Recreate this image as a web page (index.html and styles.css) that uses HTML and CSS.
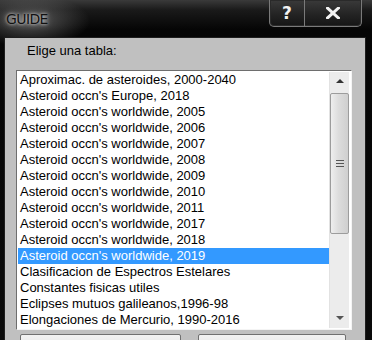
FILE: index.html
```html
<!DOCTYPE html>
<html>
<head>
<meta charset="utf-8">
<link rel="stylesheet" href="styles.css">
</head>
<body>
<div class="window">
  <div class="titlebar">
    <div class="title">GUIDE</div>
    <div class="caption-buttons">
      <div class="cbtn help">?</div>
      <div class="cbtn close">
        <svg width="14" height="12" viewBox="0 0 14 12"><path d="M1.5 1 L12.5 11 M12.5 1 L1.5 11" stroke="#f2f2f2" stroke-width="3" stroke-linecap="square"/></svg>
      </div>
    </div>
  </div>
  <div class="client">
    <div class="label">Elige una tabla:</div>
    <div class="listbox">
      <ul class="items">
        <li>Aproximac. de asteroides, 2000-2040</li>
        <li>Asteroid occn's Europe, 2018</li>
        <li>Asteroid occn's worldwide, 2005</li>
        <li>Asteroid occn's worldwide, 2006</li>
        <li>Asteroid occn's worldwide, 2007</li>
        <li>Asteroid occn's worldwide, 2008</li>
        <li>Asteroid occn's worldwide, 2009</li>
        <li>Asteroid occn's worldwide, 2010</li>
        <li>Asteroid occn's worldwide, 2011</li>
        <li>Asteroid occn's worldwide, 2017</li>
        <li>Asteroid occn's worldwide, 2018</li>
        <li class="selected">Asteroid occn's worldwide, 2019</li>
        <li>Clasificacion de Espectros Estelares</li>
        <li>Constantes fisicas utiles</li>
        <li>Eclipses mutuos galileanos,1996-98</li>
        <li>Elongaciones de Mercurio, 1990-2016</li>
      </ul>
      <div class="scrollbar">
        <div class="arrow up"></div>
        <div class="thumb"><span class="grip"></span></div>
        <div class="track"></div>
        <div class="arrow down"></div>
      </div>
    </div>
    <div class="buttons">
      <div class="btn b1"></div>
      <div class="btn b2"></div>
    </div>
  </div>
</div>
</body>
</html>
```

FILE: styles.css
```css
html, body {
  margin: 0;
  padding: 0;
  background: #000;
}
.window {
  width: 372px;
  height: 340px;
  overflow: hidden;
  background:
    radial-gradient(ellipse 60px 26px at 30px 21px, rgba(150,150,150,0.55), rgba(80,80,80,0) 100%),
    linear-gradient(180deg, #3a3a3a 0px, #1a1a1a 10px, #050505 30px, #0a0a0a 100%);
  display: flex;
  flex-direction: column;
  font-family: "Liberation Sans", Arial, sans-serif;
}
.titlebar {
  height: 37px;
  display: flex;
  align-items: flex-start;
  justify-content: space-between;
  flex-shrink: 0;
}
.title {
  margin: 11px 0 0 6px;
  font-family: "DejaVu Sans", sans-serif;
  font-size: 14px;
  letter-spacing: -0.6px;
  color: #111;
  text-shadow: 0 0 6px #bbb, 0 0 3px #ddd;
}
.caption-buttons {
  display: flex;
  margin-right: 10px;
  height: 26px;
  border: 1px solid #7a7a7a;
  border-top: none;
  border-radius: 0 0 5px 5px;
  box-shadow: inset 0 0 0 1px #2a2a2a;
  background: linear-gradient(180deg, #3a3a3a 0%, #222 60%, #151515 100%);
}
.cbtn {
  display: flex;
  align-items: center;
  justify-content: center;
  color: #f2f2f2;
  font-family: "DejaVu Sans", sans-serif;
  font-weight: bold;
}
.help {
  width: 34px;
  font-size: 17px;
  border-right: 1px solid #7a7a7a;
}
.close {
  width: 56px;
}
.client {
  flex: 1;
  margin: 0 6px 0 4px;
  border: 1px solid #1e1e1e;
  background: #c0c0c0;
  display: flex;
  flex-direction: column;
}
.label {
  margin: 5px 0 0 22px;
  font-size: 13px;
  line-height: 16px;
  color: #000;
  height: 27px;
}
.listbox {
  margin-left: 11px;
  width: 336px;
  height: 260px;
  box-sizing: border-box;
  border: 1px solid;
  border-color: #6e6e6e #f4f4f4 #f4f4f4 #6e6e6e;
  background: #fff;
  padding: 1px 1px 1px 1px;
  display: flex;
  flex-shrink: 0;
}
.items {
  list-style: none;
  margin: 0;
  padding: 0;
  flex: 1;
  font-size: 13px;
  color: #000;
}
.items li {
  height: 16px;
  line-height: 16px;
  padding-left: 2px;
  white-space: nowrap;
}
.items li.selected {
  background: #3399ff;
  color: #fff;
}
.scrollbar {
  width: 19px;
  margin-right: 1px;
  background: #ececec;
  border-left: 1px solid #e2e2e2;
  display: flex;
  flex-direction: column;
}
.arrow {
  height: 20px;
  position: relative;
}
.arrow.up::after {
  content: "";
  position: absolute;
  left: 6px;
  top: 7px;
  border-left: 4px solid transparent;
  border-right: 4px solid transparent;
  border-bottom: 4px solid #333;
}
.arrow.down::after {
  content: "";
  position: absolute;
  left: 6px;
  top: 8px;
  border-left: 4px solid transparent;
  border-right: 4px solid transparent;
  border-top: 4px solid #555;
}
.thumb {
  margin-top: 1px;
  height: 141px;
  box-sizing: border-box;
  border: 1px solid #9c9c9c;
  border-radius: 2px;
  background: linear-gradient(90deg, #eeeeee 0%, #dcdcdc 45%, #cfcfcf 100%);
  display: flex;
  align-items: center;
  justify-content: center;
}
.grip {
  width: 8px;
  height: 7px;
  background: linear-gradient(180deg, #555 0 1px, transparent 1px 3px, #555 3px 4px, transparent 4px 6px, #555 6px 7px);
}
.track {
  flex: 1;
}
.buttons {
  display: flex;
  margin-top: 4px;
  padding-left: 15px;
  gap: 17px;
}
.btn {
  height: 20px;
  box-sizing: border-box;
  border: 1px solid #707070;
  border-radius: 2px;
  background: linear-gradient(180deg, #f2f2f2, #e2e2e2);
}
.b1 { width: 161px; }
.b2 { width: 148px; }
```
